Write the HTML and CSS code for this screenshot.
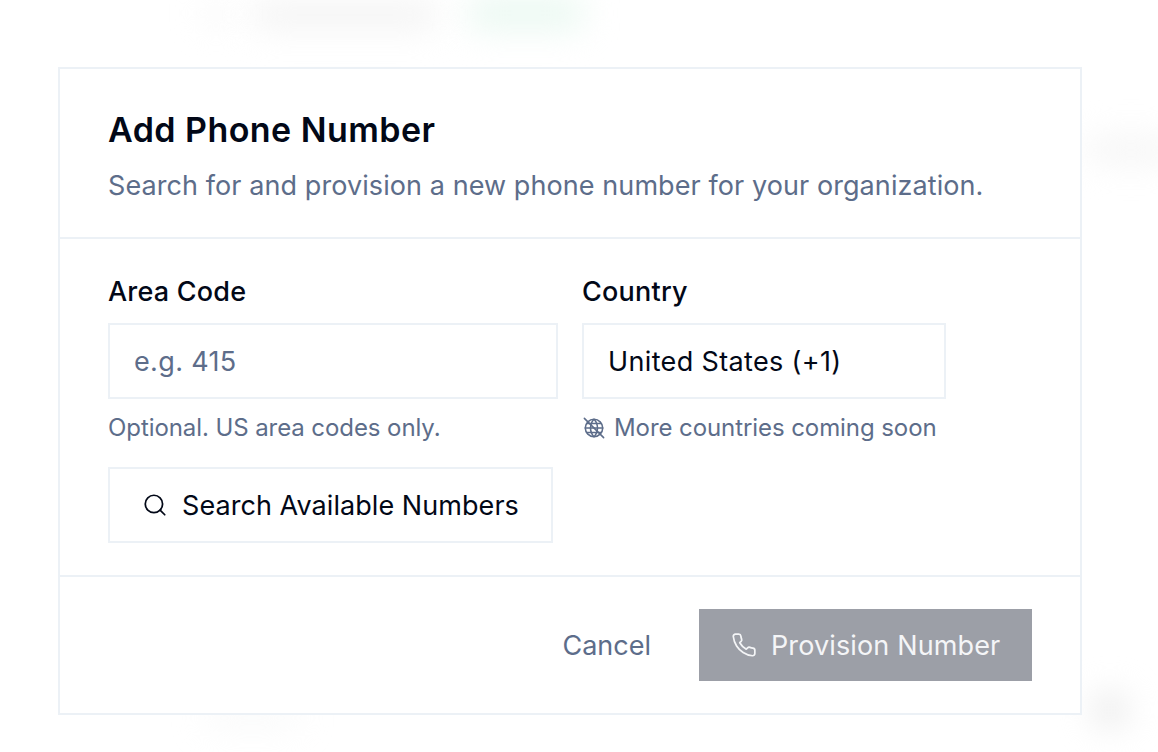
FILE: index.html
```html
<!DOCTYPE html>
<html lang="en">
<head>
<meta charset="utf-8">
<title>Add Phone Number</title>
<link rel="stylesheet" href="styles.css">
</head>
<body>
<div class="backdrop" aria-hidden="true">
  <span class="blob blob-icon"></span>
  <span class="blob blob-name"></span>
  <span class="blob blob-status"></span>
  <span class="blob blob-right"></span>
  <span class="blob blob-corner"></span>
  <span class="blob blob-bottom"></span>
</div>
<main class="dialog">
  <header class="dialog-header">
    <h1 class="dialog-title">Add Phone Number</h1>
    <p class="dialog-subtitle">Search for and provision a new phone number for your organization.</p>
  </header>
  <section class="dialog-body">
    <div class="fields">
      <div class="field field-area">
        <label class="field-label" for="area">Area Code</label>
        <input class="field-input" id="area" placeholder="e.g. 415">
        <p class="field-hint">Optional. US area codes only.</p>
      </div>
      <div class="field field-country">
        <label class="field-label" for="country">Country</label>
        <div class="field-input field-value" id="country">United States (+1)</div>
        <p class="field-hint field-hint-icon">
          <svg class="icon-hint" viewBox="0 0 24 24" fill="none" stroke="currentColor" stroke-linecap="round" stroke-linejoin="round"><circle cx="12" cy="12" r="9.500"/><path d="M2.500 12h19"/><path d="M12 2.500c2.600 2.700 3.800 5.900 3.800 9.500s-1.200 6.800-3.800 9.500c-2.600-2.700-3.800-5.900-3.800-9.500s1.200-6.800 3.800-9.500z"/><path d="M4.500 7h15M4.500 17h15"/><path d="M1.500 1.500l21 21"/></svg>
          More countries coming soon
        </p>
      </div>
    </div>
    <button class="search-button" type="button">
      <svg class="icon-btn" viewBox="0 0 24 24" fill="none" stroke="currentColor" stroke-linecap="round" stroke-linejoin="round"><circle cx="11" cy="11" r="8"/><path d="m21 21-4.300-4.300"/></svg>
      Search Available Numbers
    </button>
  </section>
  <footer class="dialog-footer">
    <button class="cancel-button" type="button">Cancel</button>
    <button class="provision-button" type="button">
      <svg class="icon-btn" viewBox="0 0 24 24" fill="none" stroke="currentColor" stroke-linecap="round" stroke-linejoin="round"><path d="M22 16.920v3a2 2 0 0 1-2.180 2 19.800 19.800 0 0 1-8.630-3.070 19.500 19.500 0 0 1-6-6 19.800 19.800 0 0 1-3.070-8.670A2 2 0 0 1 4.110 2h3a2 2 0 0 1 2 1.720c.13.96.36 1.900.7 2.810a2 2 0 0 1-.45 2.110L8.090 9.910a16 16 0 0 0 6 6l1.270-1.270a2 2 0 0 1 2.110-.45c.91.34 1.850.57 2.810.7A2 2 0 0 1 22 16.920z"/></svg>
      Provision Number
    </button>
  </footer>
</main>
</body>
</html>
```
FILE: styles.css
```css
* { box-sizing: border-box; }

html, body { height: 100%; }

body {
  margin: 0;
  height: 752px;
  overflow: hidden;
  background: #fff;
  font-family: Inter, "Liberation Sans", sans-serif;
  color: #020817;
  padding: 67px 76px 0 58px;
}

.backdrop { position: absolute; inset: 0; overflow: hidden; }

.blob { position: absolute; display: block; border-radius: 12px; filter: blur(16px); }
.blob-icon { left: 205px; top: 0; width: 22px; height: 26px; background: #f7f7f7; }
.blob-name { left: 252px; top: 2px; width: 186px; height: 26px; background: #f3f3f3; }
.blob-status { left: 468px; top: -4px; width: 116px; height: 34px; background: #ebf9f2; }
.blob-right { left: 1086px; top: 138px; width: 90px; height: 24px; background: #f5f5f5; }
.blob-corner { left: 1092px; top: 692px; width: 36px; height: 36px; background: #ebebeb; border-radius: 50%; }
.blob-bottom { left: 205px; top: 712px; width: 95px; height: 12px; background: #f5f6f6; }

.dialog {
  position: relative;
  width: 1024px;
  height: 648px;
  background: #fff;
  border: 2px solid #ecf1f6;
}

.dialog-header {
  height: 170px;
  padding: 41px 48px 0;
  border-bottom: 2px solid #ecf1f6;
}

.dialog-title {
  margin: 0;
  font-size: 34px;
  line-height: 40px;
  font-weight: 600;
  letter-spacing: 0.45px;
  color: #020817;
}

.dialog-subtitle {
  margin: 16px 0 0;
  font-size: 27px;
  line-height: 40px;
  letter-spacing: 0.08px;
  color: #5d6d8a;
}

.dialog-body {
  height: 338px;
  padding: 32px 48px 0;
  border-bottom: 2px solid #ecf1f6;
}

.fields { display: flex; gap: 24px; }

.field-area { width: 450px; }
.field-country { width: 364px; }

.field-label {
  display: block;
  padding-top: 1px;
  height: 40px;
  font-size: 27px;
  line-height: 40px;
  font-weight: 500;
  letter-spacing: 0.22px;
  color: #020817;
}

.field-input {
  display: block;
  width: 100%;
  height: 76px;
  margin-top: 12px;
  padding: 0 24px;
  border: 2px solid #ecf1f6;
  background: #fff;
  font: inherit;
  font-size: 27px;
  letter-spacing: 0.35px;
  color: #020817;
  outline: none;
}

.field-input::placeholder { color: #5d6d8a; opacity: 1; }

.field-value { display: flex; align-items: center; }

.field-hint {
  margin: 11px 0 0;
  font-size: 24px;
  line-height: 36px;
  letter-spacing: -0.08px;
  color: #5d6d8a;
}

.field-hint-icon { display: flex; align-items: center; gap: 9px; white-space: nowrap; }

.icon-hint { width: 22px; height: 22px; flex: none; stroke-width: 1.7; margin-left: 1px; }

.search-button {
  display: flex;
  align-items: center;
  gap: 14px;
  width: 445px;
  height: 76px;
  margin-top: 21px;
  padding: 0 32px;
  border: 2px solid #ecf1f6;
  background: #fff;
  font: inherit;
  font-size: 27px;
  font-weight: 400;
  letter-spacing: 0.06px;
  color: #020817;
  white-space: nowrap;
}

.icon-btn { width: 26px; height: 26px; flex: none; stroke-width: 1.6; }

.dialog-footer {
  display: flex;
  justify-content: flex-end;
  align-items: center;
  gap: 48px;
  height: 136px;
  padding: 0 48px;
}

.cancel-button {
  border: 0;
  padding: 0;
  background: none;
  font: inherit;
  font-size: 27px;
  font-weight: 400;
  letter-spacing: 0;
  color: #5d6d8a;
}

.provision-button {
  display: flex;
  align-items: center;
  gap: 14px;
  width: 333px;
  height: 72px;
  padding: 0 32px;
  border: 0;
  background: #9c9fa7;
  font: inherit;
  font-size: 27px;
  font-weight: 400;
  letter-spacing: 0.13px;
  color: #f4f5f7;
  white-space: nowrap;
}
```
